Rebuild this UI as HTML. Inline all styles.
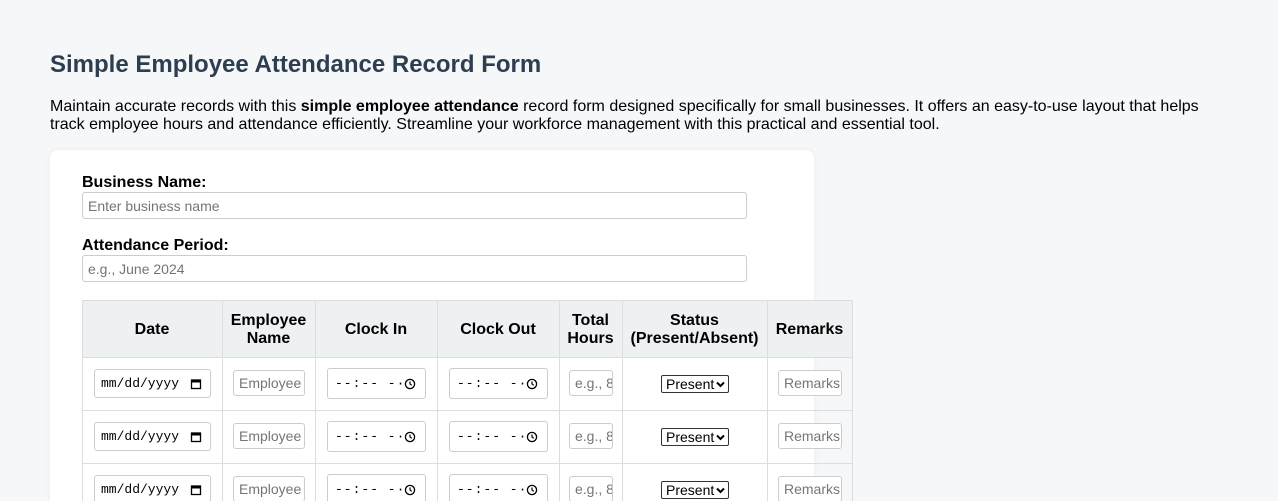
<!DOCTYPE html>
<html style="height:501px;overflow:hidden"><head><style>
body{margin:0;background:#f6f7f9;font-family:"Liberation Sans",Arial,sans-serif;color:#000;width:1278px;height:501px;overflow:hidden;position:relative}
h1{position:absolute;left:50px;top:51px;margin:0;font-size:24px;color:#2c3e50;font-weight:bold}
p{position:absolute;left:50px;top:98px;margin:0;font-size:16px;line-height:18px;width:1180px;color:#000}
.card{position:absolute;left:50px;top:150px;width:764px;height:351px;background:#fff;border-radius:8px 8px 0 0;box-shadow:0 0 6px rgba(0,0,0,0.05)}
.lbl{position:absolute;left:82px;font-weight:bold;font-size:16px}
.in{position:absolute;box-sizing:border-box;border:1px solid #ccc;border-radius:3px;background:#fff;font-size:13px;color:#757575;padding-left:6px;display:flex;align-items:center}
.grid{position:absolute;background:#ddd}
.hdr{position:absolute;left:82px;top:300px;width:770px;height:57px;background:#eef1f2}
.th{position:absolute;top:301px;height:57px;display:flex;align-items:center;justify-content:center;text-align:center;font-weight:bold;font-size:16px;line-height:18px}
.mono{font-family:"Liberation Mono",monospace;color:#000;font-size:13px}
.sel{position:absolute;box-sizing:border-box;border:1px solid #333;border-radius:2px;background:#fff;font-size:14px;color:#000;padding-left:4px;display:flex;align-items:center}
</style></head><body>
<h1>Simple Employee Attendance Record Form</h1>
<p>Maintain accurate records with this <b>simple employee attendance</b> record form designed specifically for small businesses. It offers an easy-to-use layout that helps track employee hours and attendance efficiently. Streamline your workforce management with this practical and essential tool.</p>
<div class="card"></div>
<div class="lbl" style="top:174px">Business Name:</div>
<div class="in" style="left:82px;top:192px;width:665px;height:27px;font-size:14px;padding-left:5px">Enter business name</div>
<div class="lbl" style="top:237px">Attendance Period:</div>
<div class="in" style="left:82px;top:255px;width:665px;height:27px;font-size:14px;padding-left:5px">e.g., June 2024</div>
<div class="hdr"></div>
<div class="grid" style="left:82px;top:300px;width:770px;height:1px"></div>
<div class="grid" style="left:82px;top:357px;width:770px;height:1px"></div>
<div class="grid" style="left:82px;top:410px;width:770px;height:1px"></div>
<div class="grid" style="left:82px;top:463px;width:770px;height:1px"></div>
<div class="grid" style="left:82px;top:300px;width:1px;height:201px"></div>
<div class="grid" style="left:222px;top:300px;width:1px;height:201px"></div>
<div class="grid" style="left:315px;top:300px;width:1px;height:201px"></div>
<div class="grid" style="left:437px;top:300px;width:1px;height:201px"></div>
<div class="grid" style="left:559px;top:300px;width:1px;height:201px"></div>
<div class="grid" style="left:622px;top:300px;width:1px;height:201px"></div>
<div class="grid" style="left:767px;top:300px;width:1px;height:201px"></div>
<div class="grid" style="left:852px;top:300px;width:1px;height:201px"></div>
<div class="th" style="left:82px;width:140px">Date</div>
<div class="th" style="left:222px;width:93px">Employee<br>Name</div>
<div class="th" style="left:315px;width:122px">Clock In</div>
<div class="th" style="left:437px;width:122px">Clock Out</div>
<div class="th" style="left:559px;width:63px">Total<br>Hours</div>
<div class="th" style="left:622px;width:145px">Status<br>(Present/Absent)</div>
<div class="th" style="left:767px;width:85px">Remarks</div>
<script>
var ys=[357,410,463],h='';
var clock='<svg width="12" height="12" viewBox="0 0 12 12" style="position:absolute;right:9px"><circle cx="6" cy="6" r="4.6" fill="none" stroke="#000" stroke-width="1.3"/><path d="M6 3.5V6L7.8 7.3" fill="none" stroke="#000" stroke-width="1.2"/></svg>';
var cal='<svg width="12" height="12" viewBox="0 0 12 12" style="position:absolute;right:8px"><rect x="1.5" y="2" width="9" height="8.5" fill="none" stroke="#000" stroke-width="1.3"/><rect x="1.5" y="2" width="9" height="2.5" fill="#000"/></svg>';
var chev='<svg width="9" height="7" viewBox="0 0 9 7" style="position:absolute;right:3px;top:5px"><path d="M1 1.5L4.5 5L8 1.5" fill="none" stroke="#000" stroke-width="2"/></svg>';
ys.forEach(function(y){
h+='<div class="in mono" style="left:94px;top:'+(y+12)+'px;width:117px;height:29px">mm/dd/yyyy'+cal+'</div>';
h+='<div class="in" style="left:233px;top:'+(y+13)+'px;width:72px;height:26px;font-size:14px;overflow:hidden;white-space:nowrap;padding-left:5px">Employee</div>';
h+='<div class="in mono" style="left:327px;top:'+(y+11)+'px;width:99px;height:31px;padding-left:7px;letter-spacing:1px">--:-- -·'+clock+'</div>';
h+='<div class="in mono" style="left:449px;top:'+(y+11)+'px;width:99px;height:31px;padding-left:7px;letter-spacing:1px">--:-- -·'+clock+'</div>';
h+='<div class="in" style="left:569px;top:'+(y+13)+'px;width:44px;height:26px;font-size:14px;overflow:hidden;white-space:nowrap;padding-left:5px">e.g.,&nbsp;8</div>';
h+='<div class="sel" style="left:661px;top:'+(y+18)+'px;width:68px;height:18px">Present'+chev+'</div>';
h+='<div class="in" style="left:778px;top:'+(y+13)+'px;width:64px;height:26px;font-size:14px;overflow:hidden;white-space:nowrap;padding-left:5px">Remarks</div>';
});
document.write(h);
</script>
</body></html>
